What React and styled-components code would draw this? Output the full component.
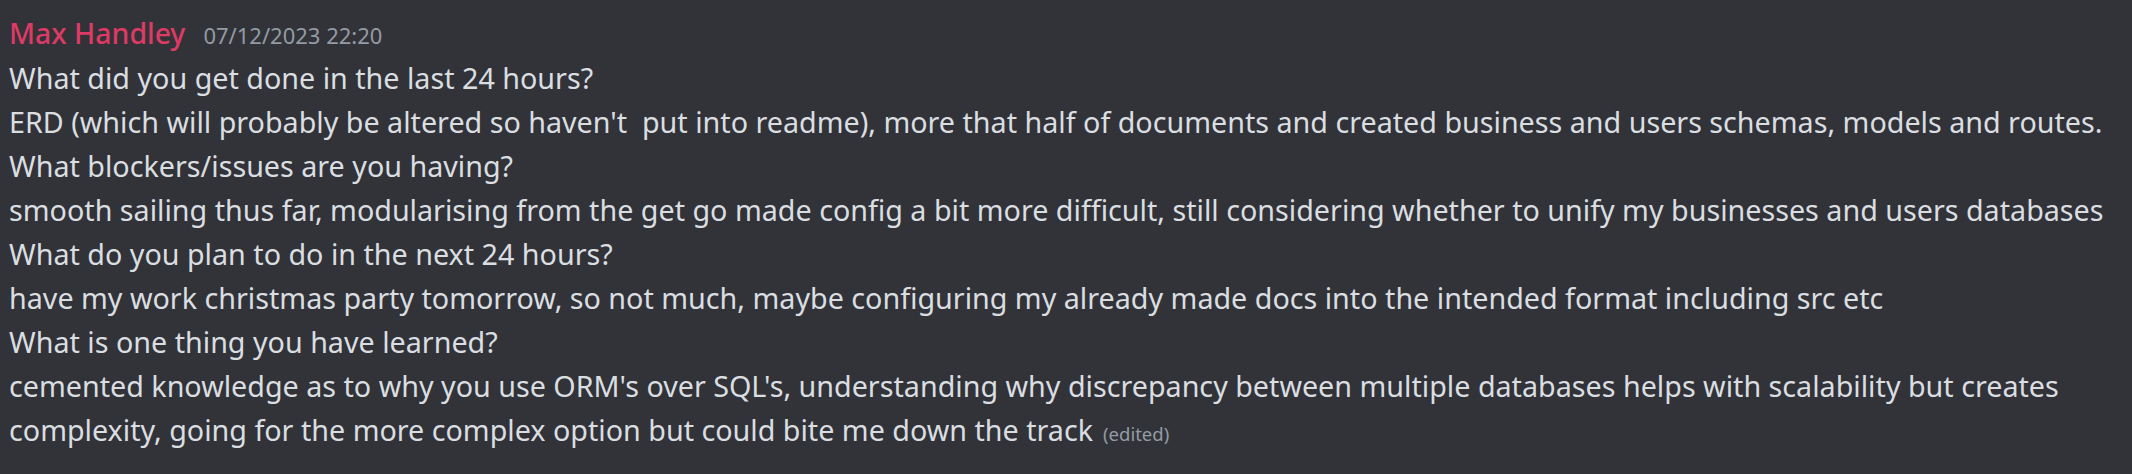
import React from 'react';
import styled, { createGlobalStyle } from 'styled-components';

const GlobalStyle = createGlobalStyle`
  html, body {
    margin: 0;
    padding: 0;
    background: #313338;
  }
`;

const Message = styled.div`
  box-sizing: border-box;
  width: 2132px;
  height: 474px;
  padding: 11px 12px 0 9px;
  background: #313338;
  font-family: 'Noto Sans', 'Open Sans', sans-serif;
  color: #dbdee1;
`;

const Header = styled.div`
  display: flex;
  align-items: baseline;
  gap: 18px;
  height: 45px;
  line-height: 44px;
`;

const Author = styled.span`
  font-size: 28.4px;
  font-weight: 500;
  color: #dd3a65;
`;

const Timestamp = styled.span`
  font-size: 22px;
  color: #949ba4;
`;

const Body = styled.div`
  font-size: 28.7px;
  line-height: 44px;
`;

const Line = styled.div`
  white-space: pre;
`;

const Edited = styled.span`
  font-size: 18.5px;
  color: #949ba4;
  margin-left: 10px;
`;

const lines = [
  'What did you get done in the last 24 hours?',
  "ERD (which will probably be altered so haven't  put into readme), more that half of documents and created business and users schemas, models and routes.",
  'What blockers/issues are you having?',
  'smooth sailing thus far, modularising from the get go made config a bit more difficult, still considering whether to unify my businesses and users databases',
  'What do you plan to do in the next 24 hours?',
  'have my work christmas party tomorrow, so not much, maybe configuring my already made docs into the intended format including src etc',
  'What is one thing you have learned?',
  "cemented knowledge as to why you use ORM's over SQL's, understanding why discrepancy between multiple databases helps with scalability but creates",
];

const App = () => {
  return (
    <>
      <GlobalStyle />
      <Message>
        <Header>
          <Author>Max Handley</Author>
          <Timestamp>07/12/2023 22:20</Timestamp>
        </Header>
        <Body>
          {lines.map((text, i) => (
            <Line key={i}>{text}</Line>
          ))}
          <Line>
            <span>complexity, going for the more complex option but could bite me down the track</span>
            <Edited>(edited)</Edited>
          </Line>
        </Body>
      </Message>
    </>
  );
};

export default App;
